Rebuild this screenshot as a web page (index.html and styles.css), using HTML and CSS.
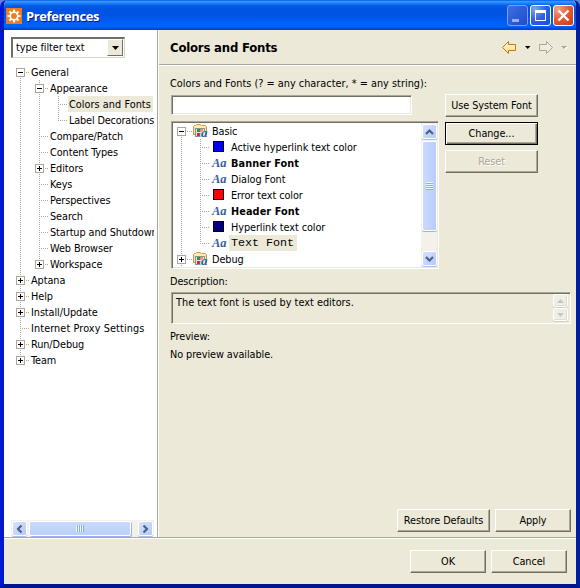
FILE: index.html
```
<!DOCTYPE html>
<html lang="en">
<head>
<meta charset="utf-8">
<title>Preferences</title>
<link rel="stylesheet" href="styles.css">
</head>
<body>
<svg width="0" height="0" class="defs">
  <defs>
    <linearGradient id="gold" x1="0" y1="0" x2="0" y2="1"><stop offset="0" stop-color="#fffbe0"/><stop offset="1" stop-color="#ffd980"/></linearGradient>
    <symbol id="folder" viewBox="0 0 16 16">
      <path d="M.5 11.500v-8l1-1h1l1-1h4l1 1h4l1 1v8z" fill="#fbe3a4" stroke="#d09a45"/>
      <path d="M2 4h10" stroke="#fff7d8"/>
      <rect x="2.500" y="5.500" width="9" height="8" fill="#dfe6ee" stroke="#8a92a0"/>
      <path d="M4 6h3v3h-3z" fill="#3f8a4f"/><path d="M7 6h3v3h-3z" fill="#e0a030"/><path d="M4 10h3v3h-3z" fill="#cc3020"/><path d="M7 10h3v3h-3z" fill="#2858a8"/>
    </symbol>
    <symbol id="chev" viewBox="0 0 9 6"><path d="M1 5 4.500 1.500 8 5" fill="none" stroke="#4d6185" stroke-width="2.200"/></symbol>
  </defs>
</svg>
<div class="window">
  <header class="titlebar">
    <svg class="app" width="16" height="16" viewBox="0 0 16 16"><rect width="16" height="16" fill="#ee7b1c"/><g stroke="#fff" stroke-width="2.200"><path d="M8 1.500v13M1.500 8h13M3.500 3.500l9 9M12.500 3.500l-9 9"/></g><circle cx="8" cy="8" r="4.600" fill="#fff"/><circle cx="8" cy="8" r="2.900" fill="#ee7b1c"/></svg>
    <h1>Preferences</h1>
    <div class="winbtns">
      <span class="wb dim"><svg width="19" height="19"><path d="M4 13h7v3h-7z" fill="#98aef0"/></svg></span>
      <span class="wb"><svg width="19" height="19"><path d="M4 4h11v11h-11zM5 7v7h9v-7z" fill="#fff" fill-rule="evenodd"/></svg></span>
      <span class="wb close"><svg width="19" height="19"><path d="M4.500 4.500l10 10M14.500 4.500l-10 10" stroke="#fff" stroke-width="2.400"/></svg></span>
    </div>
  </header>
  <div class="content">
    <aside class="side">
      <div class="combo"><span>type filter text</span><b class="drop"><svg width="7" height="4"><path d="M0 0h7L3.500 4z"/></svg></b></div>
      <div class="tree">
        <div class="row"><i class="c first"><u class="minus"></u></i><span>General</span></div>
        <div class="row"><i class="c v"></i><i class="c t"><u class="minus"></u></i><span>Appearance</span></div>
        <div class="row"><i class="c v"></i><i class="c v"></i><i class="c t"></i><span class="sel w85">Colors and Fonts</span></div>
        <div class="row"><i class="c v"></i><i class="c v"></i><i class="c l"></i><span class="tight">Label Decorations</span></div>
        <div class="row"><i class="c v"></i><i class="c t"></i><span>Compare/Patch</span></div>
        <div class="row"><i class="c v"></i><i class="c t"></i><span>Content Types</span></div>
        <div class="row"><i class="c v"></i><i class="c t"><u class="plus"></u></i><span>Editors</span></div>
        <div class="row"><i class="c v"></i><i class="c t"></i><span>Keys</span></div>
        <div class="row"><i class="c v"></i><i class="c t"></i><span>Perspectives</span></div>
        <div class="row"><i class="c v"></i><i class="c t"></i><span>Search</span></div>
        <div class="row"><i class="c v"></i><i class="c t"></i><span>Startup and Shutdown</span></div>
        <div class="row"><i class="c v"></i><i class="c t"></i><span>Web Browser</span></div>
        <div class="row"><i class="c v"></i><i class="c l"><u class="plus"></u></i><span>Workspace</span></div>
        <div class="row"><i class="c t"><u class="plus"></u></i><span>Aptana</span></div>
        <div class="row"><i class="c t"><u class="plus"></u></i><span>Help</span></div>
        <div class="row"><i class="c t"><u class="plus"></u></i><span>Install/Update</span></div>
        <div class="row"><i class="c t"></i><span class="wide">Internet Proxy Settings</span></div>
        <div class="row"><i class="c t"><u class="plus"></u></i><span>Run/Debug</span></div>
        <div class="row"><i class="c l"><u class="plus"></u></i><span>Team</span></div>
      </div>
      <div class="hscroll">
        <span class="sb"><svg class="left" width="9" height="6"><use href="#chev"/></svg></span>
        <span class="sb hthumb"><i class="grip"></i></span>
        <span class="sb end"><svg class="right" width="9" height="6"><use href="#chev"/></svg></span>
      </div>
    </aside>
    <main class="page">
      <div class="head">
        <h2>Colors and Fonts</h2>
        <svg width="66" height="14" viewBox="0 0 66 14"><path d="M.5 6.500 6.500.5v3h7v6h-7v3z" fill="url(#gold)" stroke="#c07a10"/><path d="M23 5h5.500L25.700 8z"/><path d="M50.500 6.500 44.500.5v3h-7v6h7v3z" fill="#efede2" stroke="#aca899"/><path d="M60 6h6l-3 3z" fill="#fff"/><path d="M59 5h6l-3 3z" fill="#aca899"/></svg>
      </div>
      <div class="body">
        <p class="hint">Colors and Fonts (? = any character, * = any string):</p>
        <div class="cols">
          <div class="left-col">
            <div class="input"></div>
            <div class="list">
              <div class="items">
                <div class="row"><i class="c first"><u class="minus"></u></i><b class="ico"><svg width="16" height="16"><use href="#folder"/></svg><em>a</em></b><span>Basic</span></div>
                <div class="row"><i class="c v"></i><i class="c t"></i><b class="sw blue"></b><span>Active hyperlink text color</span></div>
                <div class="row"><i class="c v"></i><i class="c t"></i><b class="aa">Aa</b><span class="bold">Banner Font</span></div>
                <div class="row"><i class="c v"></i><i class="c t"></i><b class="aa">Aa</b><span>Dialog Font</span></div>
                <div class="row"><i class="c v"></i><i class="c t"></i><b class="sw red"></b><span>Error text color</span></div>
                <div class="row"><i class="c v"></i><i class="c t"></i><b class="aa">Aa</b><span class="bold">Header Font</span></div>
                <div class="row"><i class="c v"></i><i class="c t"></i><b class="sw navy"></b><span>Hyperlink text color</span></div>
                <div class="row"><i class="c v"></i><i class="c l"></i><b class="aa">Aa</b><span class="sel mono">Text Font</span></div>
                <div class="row"><i class="c t"><u class="plus"></u></i><b class="ico"><svg width="16" height="16"><use href="#folder"/></svg><em>a</em></b><span>Debug</span></div>
              </div>
              <div class="vscroll">
                <span class="sb"><svg width="9" height="6"><use href="#chev"/></svg></span>
                <span class="sb vthumb"><i class="grip"></i></span>
                <span class="sb end"><svg class="down" width="9" height="6"><use href="#chev"/></svg></span>
              </div>
            </div>
          </div>
          <div class="actions">
            <button class="btn">Use System Font</button>
            <button class="btn default">Change...</button>
            <button class="btn off">Reset</button>
          </div>
        </div>
        <p class="lbl">Description:</p>
        <div class="desc"><span>The text font is used by text editors.</span>
          <div class="spin"><b><svg width="7" height="4"><path d="M0 4h7L3.500 0z" fill="#c9c7ba"/></svg></b><b><svg width="7" height="4"><path d="M0 0h7L3.500 4z" fill="#c9c7ba"/></svg></b></div>
        </div>
        <p class="lbl preview">Preview:</p>
        <p class="none">No preview available.</p>
        <div class="apply"><button class="btn">Restore Defaults</button><button class="btn small">Apply</button></div>
      </div>
    </main>
  </div>
  <footer class="foot"><button class="btn small">OK</button><button class="btn small">Cancel</button></footer>
</div>
</body>
</html>
```
FILE: styles.css
```
* { box-sizing: border-box; }
body { margin: 0; background: #5b86dc; font: 10.8px/16px "DejaVu Sans Condensed", "DejaVu Sans", sans-serif; font-stretch: condensed; letter-spacing: -0.07px; color: #000; overflow: hidden; }
.defs { position: absolute; }
h1, h2, p { margin: 0; }
p { height: 16px; line-height: 18px; }
svg { display: block; flex: none; }
.window { width: 580px; height: 588px; display: flex; flex-direction: column; background: #ece9d8; border: solid; border-width: 0 4px 4px; border-color: #0831d9 #001ea0 #001590 #0019cf; border-radius: 7px 7px 0 0; overflow: hidden; }
.titlebar { height: 30px; margin: 0 -4px; padding: 1px 6px 0; flex: none; display: flex; align-items: center; background: linear-gradient(#0058e6 0, #3a93ff 5%, #288eff 8%, #0660ea 18%, #0053df 30%, #0055e5 52%, #0061fc 80%, #0062fe 88%, #004fe0 94%, #003dd7 100%); }
.titlebar h1 { margin-left: 4px; flex: 1; font: bold 13px/18px "Open Sans", sans-serif; letter-spacing: -0.4px; color: #fff; text-shadow: 1px 1px #0a1883; }
.winbtns { display: flex; gap: 2px; }
.wb { width: 21px; height: 21px; border: 1px solid #fff; border-radius: 3px; background: radial-gradient(circle at 20% 15%, #7ea2f5, #2b62e8 50%, #1a4bd0); overflow: hidden; }
.wb.dim { border-color: #7e9eea; background: linear-gradient(135deg, #3d6ee2, #1c4ccc); }
.wb.close { background: radial-gradient(circle at 20% 15%, #f0a28a, #e25a36 50%, #c63e18); }
.content { flex: 1; display: flex; min-height: 0; }
.side { width: 154px; padding: 7px 3px 0 7px; background: #fff; border-right: 1px solid #aca899; display: flex; flex-direction: column; }
.combo { width: 114px; height: 21px; flex: none; display: flex; justify-content: space-between; padding-left: 3px; border: solid; border-width: 2px 1px 1px 2px; border-color: #716f64 #d8d5c6 #d8d5c6 #716f64; line-height: 17px; }
.drop { width: 16px; height: 17px; margin-right: 1px; display: grid; place-items: center; background: #ece9d8; border: 1px solid; border-color: #fff #716f64 #716f64 #fff; }
.tree { margin-top: 6px; flex: 1; overflow: hidden; }
.row { height: 16px; display: flex; white-space: nowrap; }
.row span { padding-left: 1px; height: 16px; line-height: 18px; }
.c { width: 19px; flex: none; position: relative; --v: repeating-linear-gradient(#aca899 0 1px, transparent 1px 2px); --h: repeating-linear-gradient(90deg, #aca899 0 1px, transparent 1px 2px); background-repeat: no-repeat; }
.c.v { background-image: var(--v); background-size: 1px 16px; background-position: 9px 0; }
.c.t { background-image: var(--v), var(--h); background-size: 1px 16px, 9px 1px; background-position: 9px 0, 9px 8px; }
.c.l { background-image: var(--v), var(--h); background-size: 1px 9px, 9px 1px; background-position: 9px 0, 9px 8px; }
.c.first { background-image: var(--v), var(--h); background-size: 1px 8px, 9px 1px; background-position: 9px 8px, 9px 8px; }
.c u { display: block; width: 9px; height: 9px; margin: 4px 0 0 5px; border: 1px solid #aca899; background: linear-gradient(#000, #000) 1px 3px / 5px 1px no-repeat #fff; }
.c u.plus { background: linear-gradient(#000, #000) 1px 3px / 5px 1px no-repeat, linear-gradient(#000, #000) 3px 1px / 1px 5px no-repeat #fff; }
.sel { background: #ece9d8; }
.row .w85 { width: 85px; letter-spacing: 0.05px; }
.row .tight { letter-spacing: -0.15px; }
.row .wide { letter-spacing: 0.1px; }
.bold { font-weight: bold; letter-spacing: 0.1px; }
.hscroll { height: 17px; flex: none; display: flex; padding: 1px 0 0 1px; background: #f3f1ea; }
.sb { display: grid; place-items: center; width: 15px; height: 15px; flex: none; border: 1px solid #fff; border-radius: 2px; background: linear-gradient(135deg, #d6e2ff, #b5cafa); box-shadow: 0 1px #a5bfee; }
.sb.hthumb { width: 102px; margin-left: 2px; background: linear-gradient(#cbdafe, #bccffc); box-shadow: 1px 1px #98b4e8; }
.hscroll .end { margin-left: auto; margin-right: 1px; }
.left { transform: rotate(-90deg); } .right { transform: rotate(90deg); } .down { transform: rotate(180deg); }
.grip { width: 8px; height: 7px; background: repeating-linear-gradient(90deg, #f1f6ff 0 1px, #8cabf0 1px 2px); }
.vscroll .grip { width: 7px; height: 8px; background: repeating-linear-gradient(#f1f6ff 0 1px, #8cabf0 1px 2px); }
.page { flex: 1; display: flex; flex-direction: column; border-left: 1px solid #fff; min-width: 0; }
.head { height: 36px; flex: none; display: flex; justify-content: space-between; align-items: center; padding: 0 8px 0 11px; border-bottom: 1px solid #fff; box-shadow: inset 0 -1px #aca899; }
.head h2 { font-size: 13px; letter-spacing: -0.2px; }
.body { flex: 1; display: flex; flex-direction: column; padding: 9px 5px 5px 12px; }
.hint { margin-left: -1px; letter-spacing: 0.02px; }
.cols { display: flex; gap: 6px; margin-top: 3px; }
.left-col { width: 268px; }
.input { width: 241px; height: 20px; background: #fff; margin-top: 1px; }
.input, .list, .desc { padding: 1px; border: 1px solid; border-color: #aca899 #fff #fff #aca899; box-shadow: inset 1px 1px #716f64, inset -1px -1px #ece9d8; }
.list { height: 148px; margin-top: 6px; background: #fff; display: flex; }
.items { margin-left: -1px; flex: 1; overflow: hidden; }
.sw { width: 11px; height: 11px; margin: 2px 6px 0 3px; border: 1px solid #000; flex: none; }
.blue { background: #00f; } .red { background: #f00; } .navy { background: #000080; }
.aa { width: 20px; flex: none; padding-left: 2px; font: italic bold 12.5px/16px "Liberation Serif", serif; color: #335f9e; letter-spacing: 0; }
.ico { width: 20px; flex: none; position: relative; padding-left: 2px; background: repeating-linear-gradient(90deg, #aca899 0 1px, transparent 1px 2px) 0 8px / 2px 1px no-repeat; }
.ico em { position: absolute; left: 10px; top: 3px; font: italic bold 13px/14px "Liberation Serif", serif; color: #335f9e; text-shadow: -1px 0 #fff; }
.row .mono { padding: 0 3px 0 2px; margin-left: -1px; font: 11.7px/17px "Liberation Mono", monospace; letter-spacing: 0; }
.vscroll { width: 16px; flex: none; display: flex; flex-direction: column; align-items: center; padding: 1px 0; background: #f3f1ea; }
.vthumb { height: 90px; margin-top: 2px; background: linear-gradient(90deg, #cbdafe, #b9cdfb); box-shadow: 0 1px #98b4e8; }
.vscroll .end { margin-top: auto; }
.actions { display: flex; flex-direction: column; gap: 5px; }
.btn { width: 93px; height: 23px; padding: 0; border: 1px solid; border-color: #fff #716f64 #716f64 #fff; box-shadow: inset -1px -1px #aca899; background: #ece9d8; font: inherit; line-height: 21px; letter-spacing: inherit; color: #000; white-space: nowrap; }
.default { border-color: #000; box-shadow: inset 1px 1px #fff, inset -1px -1px #716f64, inset -2px -2px #aca899; }
.off { color: #aca899; text-shadow: 1px 1px #fff; }
.small { width: 76px; }
.lbl { margin: 4px 0 0 -1px; }
.desc { height: 32px; margin-top: 3px; display: flex; justify-content: space-between; padding-left: 4px; letter-spacing: 0.02px; }
.desc span { line-height: 18px; }
.spin { display: flex; flex-direction: column; width: 15px; gap: 1px; margin-right: 1px; }
.spin b { height: 13px; display: grid; place-items: center; border: 1px solid #fff; border-radius: 2px; box-shadow: 0 1px #d5d2bd, inset -1px -1px #e0ddd0; background: #f0efe7; }
.preview { margin-top: 4px; }
.none { margin: 2px 0 0 -1px; }
.apply { margin-top: auto; display: flex; justify-content: flex-end; gap: 5px; }
.foot { height: 47px; flex: none; display: flex; justify-content: flex-end; gap: 5px; padding: 12px 9px 0 0; border-top: 1px solid #aca899; box-shadow: inset 0 1px #fff; background: #ece9d8; }
```
